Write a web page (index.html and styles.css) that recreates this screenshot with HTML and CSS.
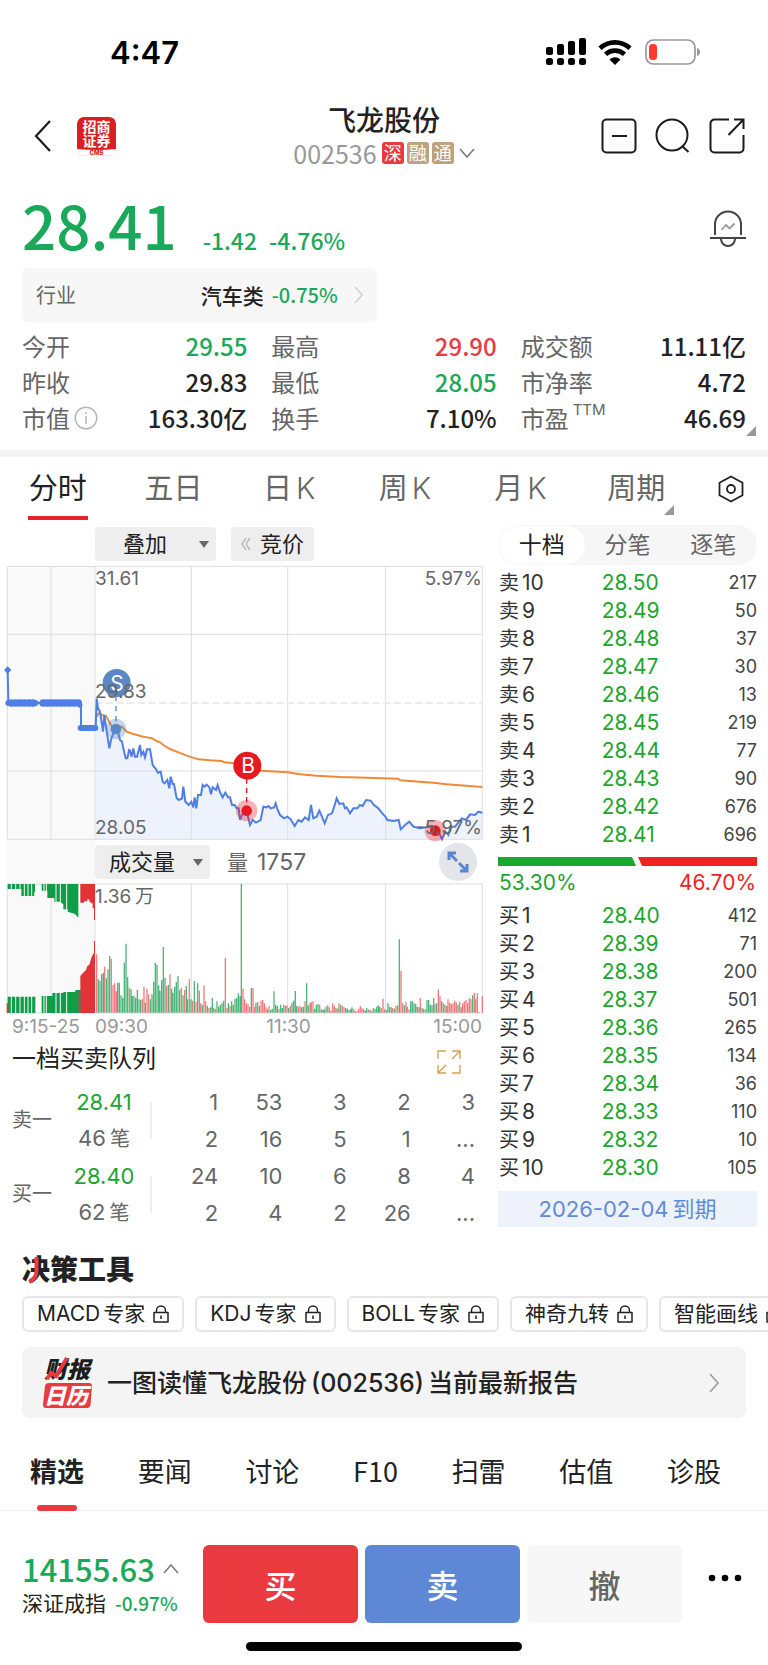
FILE: index.html
```html
<!DOCTYPE html>
<html lang="zh-CN">
<head>
<meta charset="utf-8">
<meta name="viewport" content="width=device-width, initial-scale=1">
<title>飞龙股份 002536</title>
<link rel="stylesheet" href="styles.css">
</head>
<body>
<svg class="defs" width="0" height="0" aria-hidden="true">
  <symbol id="lock" viewBox="0 0 16 18"><path d="M1 7.500h14v9.500h-14zM3.500 7.500v-2a4.500 4.500 0 0 1 9 0v2M8 10.500v3.500" fill="none" stroke="currentColor" stroke-width="1.500" stroke-linejoin="round"/></symbol>
  <symbol id="right" viewBox="0 0 10 20"><path d="M1 1l8 9-8 9" fill="none" stroke="currentColor" stroke-width="1.500"/></symbol>
</svg>

<div class="status">
  <span class="clock">4:47</span>
  <svg class="signal" viewBox="0 0 40 28" width="40" height="28" aria-hidden="true"><g><rect x="0" y="9" width="7" height="8" rx="2"/><rect x="11" y="6" width="7" height="11" rx="2"/><rect x="22" y="3" width="7" height="14" rx="2"/><rect x="33" y="0" width="7" height="17" rx="2"/><rect x="0" y="20" width="7" height="7" rx="2.500"/><rect x="11" y="20" width="7" height="7" rx="2.500"/><rect x="22" y="20" width="7" height="7" rx="2.500"/><rect x="33" y="20" width="7" height="7" rx="2.500"/></g></svg>
  <svg class="wifi" viewBox="0 0 34 25" width="34" height="25" aria-hidden="true"><path d="M2 8.300A22 22 0 0 1 32 8.300M7.500 14.300A14 14 0 0 1 26.500 14.300" fill="none" stroke="#000" stroke-width="4.600"/><path d="M17 25l-5.500-5.500a8 8 0 0 1 11 0z"/></svg>
  <svg viewBox="0 0 56 26" width="56" height="26" aria-hidden="true"><rect x="1" y="1" width="49" height="24" rx="7.500" fill="none" stroke="#999" stroke-width="1.700"/><rect x="4" y="5" width="8" height="16" rx="3.500" fill="#ff3b30"/><path d="M52 9c4 1 4 7 0 8z" fill="#999"/></svg>
</div>

<header class="header">
  <div class="side start">
    <button class="icon-btn" aria-label="返回"><svg viewBox="0 0 18 32" width="18" height="32"><path d="M16 1L2 16l14 15" fill="none" stroke="#1c1c1c" stroke-width="2.200"/></svg></button>
    <svg class="cms" viewBox="0 0 39 39" width="39" height="39" role="img" aria-label="招商证券 CMS"><rect x=".5" y=".5" width="38" height="38" rx="6" fill="#fff" stroke="#ececec"/><path d="M0 32V7a7 7 0 0 1 7-7h25a7 7 0 0 1 7 7v25q-19.500 2-39 0z" fill="#d91f22"/><g fill="#fff" font-size="14" font-weight="700" text-anchor="middle"><text x="19.500" y="15">招商</text><text x="19.500" y="29">证券</text></g><text x="19.500" y="38" fill="#d91f22" font-size="6" font-weight="800" text-anchor="middle">CMS</text></svg>
  </div>
  <div class="title">
    <h1>飞龙股份</h1>
    <button class="code">002536 <i class="tag red">深</i><i class="tag">融</i><i class="tag">通</i><svg viewBox="0 0 16 10" width="16" height="10"><path d="M1 1l7 8 7-8" fill="none" stroke="#777" stroke-width="1.500"/></svg></button>
  </div>
  <div class="side end">
    <button class="icon-btn" aria-label="删除自选"><svg viewBox="0 0 36 36" width="36" height="36"><rect x="1.500" y="1.500" width="33" height="33" rx="4" fill="none" stroke="#1c1c1c" stroke-width="2"/><path d="M11 18h15" stroke="#1c1c1c" stroke-width="2"/></svg></button>
    <button class="icon-btn" aria-label="搜索"><svg viewBox="0 0 36 36" width="36" height="36"><circle cx="17" cy="17" r="15.500" fill="none" stroke="#1c1c1c" stroke-width="2"/><path d="M27 28l6.500 6" stroke="#1c1c1c" stroke-width="2"/></svg></button>
    <button class="icon-btn" aria-label="分享"><svg viewBox="0 0 36 36" width="36" height="36"><path d="M20 1.500H5.500a4 4 0 0 0-4 4v25a4 4 0 0 0 4 4h25a4 4 0 0 0 4-4V17M25 1.500h9.500V11M34.500 1.500L19.500 17" fill="none" stroke="#1c1c1c" stroke-width="2"/></svg></button>
  </div>
</header>

<section class="quote">
  <div class="price-row">
    <strong class="price">28.41</strong>
    <span class="change">-1.42</span><span class="change">-4.76%</span>
    <button class="icon-btn bell" aria-label="提醒"><svg viewBox="0 0 36 37" width="36" height="37"><path d="M5 25V14.500a13 13 0 0 1 26 0V25M0 28h36M11 29a7 7 0 0 0 14 0" fill="none" stroke="#444" stroke-width="2"/><path d="M11.500 20l4.500-5 3.500 3.500 5-5" fill="none" stroke="#999" stroke-width="1.800"/></svg></button>
  </div>
  <a class="industry" href="#"><span class="muted">行业</span><span class="ind-name">汽车类</span><span class="green">-0.75%</span><svg width="9" height="20"><use href="#right"/></svg></a>
  <dl class="stats">
    <div><dt>今开</dt><dd class="green">29.55</dd></div>
    <div><dt>最高</dt><dd class="red-t">29.90</dd></div>
    <div><dt>成交额</dt><dd>11.11亿</dd></div>
    <div><dt>昨收</dt><dd>29.83</dd></div>
    <div><dt>最低</dt><dd class="green">28.05</dd></div>
    <div><dt>市净率</dt><dd>4.72</dd></div>
    <div><dt>市值<svg viewBox="0 0 24 24" width="24" height="24"><circle cx="12" cy="12" r="10.800" fill="none" stroke="#b5b5b5" stroke-width="1.400"/><path d="M12 10v8M12 6v2" stroke="#b5b5b5" stroke-width="1.500"/></svg></dt><dd>163.30亿</dd></div>
    <div><dt>换手</dt><dd>7.10%</dd></div>
    <div class="more"><dt>市盈<sup>TTM</sup></dt><dd>46.69</dd></div>
  </dl>
</section>

<nav class="periods">
  <button class="on">分时</button><button>五日</button><button>日<b>K</b></button><button>周<b>K</b></button><button>月<b>K</b></button><button class="drop">周期</button>
  <button class="setting" aria-label="设置"><svg viewBox="0 0 28 28" width="28" height="28"><path d="M14 1.500l11.500 6.300v12.400L14 26.500 2.500 20.200V7.800z" fill="none" stroke="#222" stroke-width="1.800" stroke-linejoin="round"/><circle cx="14" cy="14" r="4" fill="none" stroke="#222" stroke-width="1.800"/></svg></button>
</nav>

<main class="board">
  <div class="left">
    <div class="tools">
      <button class="pill overlay">叠加<i class="caret"></i></button>
      <button class="pill"><svg viewBox="0 0 10 12" width="10" height="12"><path d="M5 0L1 6l4 6M9 0L5 6l4 6" fill="none" stroke="#aaa" stroke-width="1.200"/></svg>竞价</button>
    </div>
    <svg class="chart" viewBox="0 0 490 278" role="img" aria-label="分时走势">
      <g transform="translate(0 -2) scale(.333333)">
        <path d="M22 19h263v820H22z" fill="#f9f9f9"/>
        <path d="M290 415L294 445 300 455 304 480 309 515 313 465 318 500 328 565 334 535 340 520 347 505 355 520 360 540 366 545 370 565 377 595 382 595 387 570 395 590 400 565 405 590 411 590 420 555 424 585 430 575 435 592 441 568 450 568 458 615 466 625 474 638 482 635 488 665 494 670 502 660 508 685 512 650 518 672 522 672 530 715 546 716 550 680 556 725 566 735 574 725 580 742 584 712 589 745 594 705 603 705 608 675 633 690 653 675 668 712 690 712 704 735 716 745 720 780 740 752 750 795 782 780 790 740 822 742 827 730 840 765 862 770 884 798 905 785 926 780 933 735 940 775 958 752 974 790 996 760 1010 715 1030 735 1050 760 1080 735 1098 720 1122 735 1156 770 1196 780 1202 808 1228 785 1260 805 1318 820 1326 838 1345 825 1365 800 1410 763 1447 758V838H287V504z" fill="#edf2fd"/>
        <g fill="none" stroke="#dedede" stroke-width="3"><path d="M22 19H1447V838H22zM22 223H1447M22 633H1447M153 19V838M285 19V838M574 19V838M863 19V838M1157 19V838"/><path d="M285 429H1447" stroke="#e6e6e6" stroke-width="4" stroke-dasharray="22 10"/></g>
        <path d="M290 470L296 460 306 465 318 468 326 482 336 500 366 500 380 515 400 522 430 530 457 535 470 543 480 547 490 555 510 567 530 575 560 587 595 598 630 601 665 603 672 607 705 610 740 615 782 632 863 637 900 643 950 647 1020 651 1100 653 1195 656 1200 661 1300 668 1340 673 1447 681" fill="none" stroke="#f1893a" stroke-width="6"/>
        <path d="M23 330L25 429H239V435H243V504H287L290 415 294 445 300 455 304 480 309 515 313 465 318 500 328 565 334 535 340 520 347 505 355 520 360 540 366 545 370 565 377 595 382 595 387 570 390 572 395 590 400 565 405 590 411 590 420 555 424 585 430 575 435 592 441 568 450 568 458 615 466 625 474 638 482 635 488 665 494 670 502 660 508 685 512 650 518 672 522 672 530 715 536 720 546 716 550 680 556 725 566 735 574 725 580 742 584 712 589 745 594 705 603 705 608 675 614 680 620 674 628 682 633 703 638 682 648 690 653 675 660 697 668 712 676 698 684 712 690 712 696 735 704 735 710 745 716 745 720 780 726 765 740 752 750 795 758 780 768 788 782 780 790 740 800 742 806 738 812 745 822 742 827 730 833 750 840 765 852 775 862 770 872 778 884 798 895 780 905 785 915 772 926 780 933 735 940 775 950 770 958 752 966 770 974 790 984 765 996 760 1004 735 1010 715 1018 732 1030 730 1035 745 1040 742 1050 760 1060 745 1072 745 1080 735 1088 738 1098 720 1112 722 1122 735 1135 745 1145 758 1156 770 1162 780 1180 783 1196 780 1202 808 1215 795 1228 785 1240 800 1260 805 1290 800 1306 812 1318 820 1326 838 1336 815 1345 825 1352 800 1365 800 1385 775 1398 780 1410 763 1425 765 1435 755 1447 758" fill="none" stroke="#4f7fe6" stroke-width="6"/>
        <g fill="none" stroke="#4f7fe6" stroke-linecap="round"><path d="M25 429H78M88 429h18M127 429h108M242 504H286" stroke-width="18"/><path d="M34 429H106" stroke-width="22" stroke-dasharray="1 12"/><path d="M130 429H236" stroke-width="23" stroke-dasharray="1 12"/></g>
        <path d="M23 319l11 11-11 11-11-11zM239 425l10 10-10 10-10-10z" fill="#4f7fe6"/>
        <circle cx="348" cy="507" r="31" fill="#5a87c6" opacity=".35"/><circle cx="348" cy="507" r="16" fill="#5a87c6"/><path d="M348 408V490" stroke="#5a87c6" stroke-width="4" stroke-dasharray="16 14"/>
        <circle cx="740" cy="752" r="32" fill="#e5222a" opacity=".35"/><circle cx="740" cy="752" r="16" fill="#e5191f"/><path d="M740 655V735" stroke="#e5191f" stroke-width="4" stroke-dasharray="16 12"/>
        <circle cx="1306" cy="812" r="32" fill="#e5222a" opacity=".35"/><circle cx="1306" cy="812" r="16" fill="#e5191f"/>
        <circle cx="350" cy="369" r="42" fill="#5a87c6"/><circle cx="742" cy="617" r="42" fill="#e5191f"/>
      </g>
      <g fill="#fff" font-size="21" text-anchor="middle"><text x="117" y="129">S</text><text x="248" y="211">B</text></g>
      <g class="axis"><text x="95" y="23">31.61</text><text x="95" y="136">29.83</text><text x="95" y="272">28.05</text><text x="482" y="23" text-anchor="end">5.97%</text><text x="482" y="272" text-anchor="end">-5.97%</text></g>
    </svg>
    <div class="vol-head">
      <div class="shade"></div>
      <button class="pill">成交量<i class="caret"></i></button>
      <span class="vol">量<b>1757</b></span>
      <button class="expand" aria-label="放大"><svg viewBox="0 0 24 24" width="24" height="24"><g fill="none" stroke="#5c84d6" stroke-width="3"><path d="M3 10V3h7M3 3l8 8M21 14v7h-7M21 21l-8-8"/></g></svg></button>
    </div>
    <svg class="chart" viewBox="0 44 490 130" role="img" aria-label="成交量">
      <g transform="scale(.333333)">
        <path d="M22 132h263v387H22z" fill="#f9f9f9"/>
        <path d="M22 132H1447V519H22zM153 132V519M285 132V519M574 132V519M863 132V519M1157 132V519" fill="none" stroke="#dedede" stroke-width="3"/>
        <path d="M23 132H105V155H103V168H64V147H23zM125 132H235V233L225 222 203 215V208H190V193L180 185H163V174H142V152H125zM23 470H106V519H23zM125 468H157V459H190V456H226V450H243V519H125z" fill="#109d48"/>
        <path d="M241 132H285V240H282V205H278V190H272V185H268V178H262V184H252V188H241zM241 408L248 400 258 390 262 378 268 374 275 350 282 338V303H285V519H241zM20 490h5v29h-5z" fill="#e03436"/>
        <path d="M235 452h7v67h-7z" fill="#87605b"/>
        <path d="M34 132V519M47 132V519M60 132V519M73 132V519M84 132V519M95 132V519M132 132V519M139 132V519M168 132V519M181 132V519M200 132V519" stroke="#f9f9f9" stroke-width="3"/>
        <path id="up" stroke="#ef7d80" stroke-width="4"/>
        <path id="down" stroke="#4fb67b" stroke-width="4"/>
      </g>
      <g class="axis"><text x="95" y="63">1.36</text><text x="135" y="63">万</text></g>
    </svg>
    <div class="times"><span>9:15-25</span><span>09:30</span><span>11:30</span><span>15:00</span></div>

    <div class="queue-title"><h2>一档买卖队列</h2><button class="icon-btn" aria-label="展开"><svg viewBox="0 0 24 24" width="24" height="24"><path d="M1 9V1h8M15 1h8v8M23 1l-8 8M23 15v8h-8M9 23H1v-8M1 23l8-8" fill="none" stroke="#d0a256" stroke-width="1.400"/></svg></button></div>
    <table class="queue">
      <tr><th rowspan="2">卖一</th><td class="p green2">28.41</td><td class="sep" rowspan="2"><i></i></td><td>1</td><td>53</td><td>3</td><td>2</td><td>3</td></tr>
      <tr><td class="p">46<b>笔</b></td><td>2</td><td>16</td><td>5</td><td>1</td><td>...</td></tr>
      <tr><th rowspan="2">买一</th><td class="p green2">28.40</td><td class="sep" rowspan="2"><i></i></td><td>24</td><td>10</td><td>6</td><td>8</td><td>4</td></tr>
      <tr><td class="p">62<b>笔</b></td><td>2</td><td>4</td><td>2</td><td>26</td><td>...</td></tr>
    </table>
  </div>

  <div class="right">
    <div class="segment"><button class="on">十档</button><button>分笔</button><button>逐笔</button></div>
    <table class="book">
      <tr><th>卖<b>10</b></th><td>28.50</td><td>217</td></tr>
      <tr><th>卖<b>9</b></th><td>28.49</td><td>50</td></tr>
      <tr><th>卖<b>8</b></th><td>28.48</td><td>37</td></tr>
      <tr><th>卖<b>7</b></th><td>28.47</td><td>30</td></tr>
      <tr><th>卖<b>6</b></th><td>28.46</td><td>13</td></tr>
      <tr><th>卖<b>5</b></th><td>28.45</td><td>219</td></tr>
      <tr><th>卖<b>4</b></th><td>28.44</td><td>77</td></tr>
      <tr><th>卖<b>3</b></th><td>28.43</td><td>90</td></tr>
      <tr><th>卖<b>2</b></th><td>28.42</td><td>676</td></tr>
      <tr><th>卖<b>1</b></th><td>28.41</td><td>696</td></tr>
    </table>
    <div class="ratio"><i class="buy" style="width:53.3%"></i><i class="sell"></i></div>
    <div class="ratio-text"><span>53.30%</span><span>46.70%</span></div>
    <table class="book">
      <tr><th>买<b>1</b></th><td>28.40</td><td>412</td></tr>
      <tr><th>买<b>2</b></th><td>28.39</td><td>71</td></tr>
      <tr><th>买<b>3</b></th><td>28.38</td><td>200</td></tr>
      <tr><th>买<b>4</b></th><td>28.37</td><td>501</td></tr>
      <tr><th>买<b>5</b></th><td>28.36</td><td>265</td></tr>
      <tr><th>买<b>6</b></th><td>28.35</td><td>134</td></tr>
      <tr><th>买<b>7</b></th><td>28.34</td><td>36</td></tr>
      <tr><th>买<b>8</b></th><td>28.33</td><td>110</td></tr>
      <tr><th>买<b>9</b></th><td>28.32</td><td>10</td></tr>
      <tr><th>买<b>10</b></th><td>28.30</td><td>105</td></tr>
    </table>
    <a class="expiry" href="#">2026-02-04<b>到期</b></a>
  </div>
</main>

<section class="decision">
  <h2>决策工具<svg viewBox="0 0 14 28" width="14" height="28" aria-hidden="true"><path d="M11.500 1V14Q11.500 23 4 26" fill="none" stroke="#e93a40" stroke-width="4"/></svg></h2>
  <div class="chips">
    <button>MACD<b>专家</b><svg width="16" height="18"><use href="#lock"/></svg></button>
    <button>KDJ<b>专家</b><svg width="16" height="18"><use href="#lock"/></svg></button>
    <button>BOLL<b>专家</b><svg width="16" height="18"><use href="#lock"/></svg></button>
    <button>神奇九转<svg width="16" height="18"><use href="#lock"/></svg></button>
    <button>智能画线<svg width="16" height="18"><use href="#lock"/></svg></button>
  </div>
  <a class="banner" href="#">
    <svg viewBox="0 0 50 52" width="50" height="52" role="img" aria-label="财报日历"><path d="M6 26h40q3 0 3 3l-1.500 19q-.5 3-3.500 3H3q-3 0-3-3L2 29q.5-3 4-3z" fill="#e93a40"/><g font-weight="900" font-style="italic"><text x="1" y="21" font-size="23" fill="#1c1c1c">财报</text><text x="1" y="47" font-size="22" fill="#fff">日历</text></g><path d="M4 22l4-6 5 3L24 1" fill="none" stroke="#e93a40" stroke-width="4"/></svg>
    <span class="banner-text">一图读懂飞龙股份<b>(002536)</b>当前最新报告</span>
    <svg class="go" width="10" height="20"><use href="#right"/></svg>
  </a>
</section>

<nav class="news"><button class="on">精选</button><button>要闻</button><button>讨论</button><button>F10</button><button>扫雷</button><button>估值</button><button>诊股</button></nav>

<footer class="trade">
  <button class="index"><span class="idx">14155.63<svg viewBox="0 0 16 10" width="16" height="10"><path d="M1 9l7-8 7 8" fill="none" stroke="#777" stroke-width="1.500"/></svg></span><span class="idx-name">深证成指<b>-0.97%</b></span></button>
  <button class="act buy-b">买</button><button class="act sell-b">卖</button><button class="act">撤</button>
  <button class="dots" aria-label="更多"><svg viewBox="0 0 34 8" width="34" height="8"><circle cx="4" cy="4" r="3.300"/><circle cx="17" cy="4" r="3.300"/><circle cx="30" cy="4" r="3.300"/></svg></button>
</footer>
<div class="home"></div>
<script src="volume.js"></script>
</body>
</html>
```
FILE: volume.js
```js
// One entry per minute: u = rising, d = falling, number = bar height.
const bars = `u175 d100 d95 d115 d120 u138 d103 d130 d170 u162 u83 u88 u64 d90 d90 d52 d45 d150 d207 d107
u75 d70 d50 d50 d45 d68 d40 d38 u42 u78 d30 u72 u55 d40 d55 d92 d150 d144 d82 d66 d98 d197 d104 u80 d84 u115
d72 d60 d78 d92 d110 d68 u75 d52 u68 d80 d40 u100 d40 u36 d94 u32 d88 u66 u28 d24 u82 u34 d20 u14 d16 d44 u14
u12 d34 d18 d24 d30 d36 u164 u14 d28 u20 d34 d24 d42 d44 d58 d50 d386 u72 u40 u28 u26 u18 d74 u74 u18 d30 u32
d20 u36 u38 u28 u16 d10 u20 d8 d12 d64 d24 d20 u12 d24 d14 u24 d20 u22 d14 u20 d30 d36 d65 d20 u18 u20 d16 d18
u34 d88 d22 u28 u32 u34 d12 d24 d26 u24 d10 d8 d10 d18 u22 u16 d6 u28 u20 d14 u12 u28 d24 u20 u18 d14 d12 d8
d10 d16 u10 u6 u6 u12 u20 u14 d10 d6 d14 u10 d8 d6 u14 d12 d18 d22 d18 u14 u42 u10 d8 d28 d18 u16 u14
d12 u20 u22 d220 u126 u28 d22 u32 u18 u10 d34 d34 d30 d26 d18 u16 u44 d14 d12 u10 d38 d38 d24 d22 d44
u26 d28 u70 u50 d34 u28 d24 u20 u40 u30 u26 u28 u36 u30 d24 u32 u16 u28 u34 u38 u30 u44 u40 d52 u60 u40 u58 d2 u0 u50`.split(/\s+/);
const paths = { u: '', d: '' };
bars.forEach((bar, i) => {
  const x = Math.round(290 + i * 1157 / (bars.length - 1));
  paths[bar[0]] += `M${x} 518v-${bar.slice(1)}`;
});
document.getElementById('up').setAttribute('d', paths.u);
document.getElementById('down').setAttribute('d', paths.d);
```
FILE: styles.css
```css
* { box-sizing: border-box; }
body { margin: 0; background: #fff; color: #222; overflow-x: hidden; font-family: Inter, "Noto Sans CJK SC", sans-serif; }
button { border: 0; padding: 0; margin: 0; background: none; color: inherit; font: inherit; cursor: pointer; }
a { color: inherit; text-decoration: none; }
h1, h2, dl, dd { margin: 0; font-weight: 400; }
i { font-style: normal; }
b { font-weight: inherit; }
svg { display: block; flex: none; }
table { border-collapse: collapse; width: 100%; table-layout: fixed; }
td, th { padding: 0; font-weight: 400; }
.defs { position: absolute; }
.green { color: #1aa95a; }
.green2 { color: #1ca52f; }
.red-t { color: #e93a40; }
.muted { color: #666; }
.icon-btn { display: flex; }

.status { display: flex; align-items: center; height: 104px; padding: 0 67px 0 110px; }
.clock { margin-right: auto; font-size: 31px; font-weight: 600; color: #000; }
.signal { margin-right: 12px; }
.wifi { margin-right: 13px; }

.header { display: grid; grid-template-columns: 1fr auto 1fr; align-items: center; height: 64px; padding: 0 23px; }
.side { display: flex; align-items: center; gap: 25px; }
.side.start { padding-left: 11px; }
.side.end { justify-content: flex-end; gap: 18px; }
.title { display: flex; flex-direction: column; align-items: center; }
.title h1 { font-size: 28px; line-height: 34px; font-weight: 500; }
.code { display: flex; align-items: center; gap: 3px; font-family: "Noto Sans CJK SC", sans-serif; font-size: 25px; line-height: 30px; color: #999; }
.tag { width: 22px; height: 22px; border-radius: 3px; background: #bda27c; color: #fff; font-size: 18px; line-height: 21px; text-align: center; }
.tag.red { background: #e93a40; margin-left: 2px; }
.code svg { margin-left: 2px; }

.quote { padding: 28px 22px 14px; font-family: "Noto Sans CJK SC", sans-serif; border-bottom: 7px solid #f4f4f4; }
.price-row { display: flex; align-items: flex-end; height: 56px; color: #1aa95a; }
.price { font-size: 60px; line-height: 56px; font-weight: 500; margin-right: 26px; }
.change { font-size: 23px; line-height: 24px; font-weight: 500; margin-right: 12px; }
.bell { margin: 0 0 5px auto; }
.industry { display: flex; align-items: center; width: 49%; height: 54px; margin: 16px 0 6px; padding: 0 14px; border-radius: 6px; background: #f7f7f7; font-size: 20px; line-height: 28px; }
.ind-name { margin: 0 8px 0 auto; font-size: 21px; font-weight: 500; }
.industry .green { font-weight: 500; }
.industry svg { margin-left: 16px; color: #ccc; }
.stats { display: grid; grid-template-columns: repeat(3, 1fr); column-gap: 24px; }
.stats div { display: flex; justify-content: space-between; font-size: 24px; line-height: 36px; }
.stats dt { display: flex; align-items: center; gap: 4px; color: #666; }
.stats dd { font-weight: 500; }
.stats sup { align-self: flex-start; font-size: 15px; line-height: 20px; font-family: Inter, sans-serif; }
.more { position: relative; }
.more::after, .drop::after { content: ""; position: absolute; right: -10px; bottom: 0; border: 5px solid #999; border-top-color: transparent; border-left-color: transparent; }

.periods { display: flex; height: 63px; font-size: 29px; line-height: 40px; color: #666; }
.periods button { position: relative; flex: 1; }
.periods b { margin-left: 4px; font-size: 30px; font-weight: 300; }
.periods .on { color: #222; }
.periods .on::after { content: ""; position: absolute; left: 28px; right: 28px; bottom: 0; height: 4px; background: #e5222a; }
.periods .drop::after { right: 20px; bottom: 5px; }
.periods .setting { flex: 0 0 74px; display: flex; align-items: center; justify-content: center; }

.board { display: grid; grid-template-columns: minmax(0, 490fr) minmax(0, 278fr); }
.tools { display: flex; gap: 15px; padding: 7px 0 1px 95px; }
.pill { display: flex; align-items: center; justify-content: center; gap: 9px; height: 34px; padding: 0 10px; border-radius: 4px; background: #eee; font-size: 22px; line-height: 32px; white-space: nowrap; }
.overlay { width: 121px; padding: 0 7px 0 28px; justify-content: space-between; }
.caret { border: 5px solid transparent; border-top: 7px solid #666; border-bottom: 0; }
.chart { width: 100%; height: auto; overflow: visible; }
.axis { font-size: 19px; fill: #666; }
.vol-head { display: flex; align-items: center; height: 44px; padding: 0 13px 0 7px; }
.shade { width: 88px; align-self: stretch; background: #f9f9f9; }
.vol-head .pill { gap: 18px; padding: 0 7px 0 14px; }
.vol { margin: 0 auto 0 17px; font-size: 21px; line-height: 32px; color: #666; }
.vol b { margin-left: 9px; font-size: 23px; }
.expand { display: flex; align-items: center; justify-content: center; width: 38px; height: 38px; border-radius: 50%; background: #e4e5e9; }
.times { display: grid; grid-template-columns: 83px 1fr 1fr 1fr; padding: 0 8px 0 12px; font-size: 19px; line-height: 26px; color: #999; white-space: nowrap; }
.times span:nth-child(3) { text-align: center; }
.times span:nth-child(4) { text-align: right; }
.queue-title { display: flex; justify-content: space-between; align-items: center; height: 43px; padding: 0 29px 0 12px; }
.queue-title h2 { font-size: 24px; line-height: 32px; padding-bottom: 6px; }
.queue { width: calc(100% - 27px); margin-left: 12px; font-size: 22px; line-height: 30px; color: #666; }
.queue tr { height: 37px; }
.queue th { width: 42px; text-align: left; font-size: 20px; }
.queue td { text-align: right; }
.queue .p { width: 96px; padding-left: 4px; text-align: center; }
.queue .p.green2 { color: #1ca52f; }
.queue .p b { margin-left: 4px; font-size: 20px; }
.queue .sep { width: 4px; }
.sep i { display: block; width: 2px; height: 37px; background: #eee; }

.right { padding: 5px 11px 0 8px; }
.segment { display: flex; height: 40px; padding: 1px; border-radius: 20px; background: #f6f6f6; font-size: 23px; line-height: 34px; color: #666; }
.segment button { flex: 1; border-radius: 19px; }
.segment .on { color: #222; background: #fff; }
.book { margin-top: 4px; font-size: 21px; line-height: 26px; color: #333; }
.book tr { height: 28px; }
.book th { width: 35%; padding-left: 1px; text-align: left; font-size: 20px; }
.book b { margin-left: 3px; font-size: 21px; }
.book td { color: #1ca52f; padding-left: 13px; }
.book td + td { text-align: right; color: #444; font-size: 18px; padding: 0; }
.ratio { display: flex; gap: 2px; height: 9px; margin-top: 8px; }
.ratio .buy { background: #1ca52f; clip-path: polygon(0 0, calc(100% - 4px) 0, 100% 100%, 0 100%); }
.ratio .sell { flex: 1; background: #ee2224; clip-path: polygon(0 0, 100% 0, 100% 100%, 4px 100%); }
.ratio-text { display: flex; justify-content: space-between; font-size: 21px; line-height: 34px; color: #1ca52f; padding: 0 1px; }
.ratio-text span + span { color: #ee2224; }
.ratio-text + .book { margin-top: 2px; }
.expiry { display: block; margin-top: 9px; height: 36px; background: #eef3fb; color: #6289d8; font-size: 22px; line-height: 36px; text-align: center; }
.expiry b { margin-left: 4px; }

.decision { padding: 21px 22px 0; }
.decision h2 { position: relative; font-size: 28px; line-height: 36px; font-weight: 900; }
.decision h2 svg { position: absolute; left: 3px; top: 4px; }
.chips { display: flex; gap: 11px; margin: 8px -22px 15px 0; overflow: hidden; }
.chips button { display: flex; flex: none; align-items: center; height: 36px; padding: 0 13px; border: 2px solid #e6e6e6; border-radius: 6px; font-size: 21px; line-height: 32px; }
.chips b { margin-left: 3px; }
.chips svg { margin-left: 8px; }
.banner { display: flex; align-items: center; height: 71px; padding: 0 27px 0 21px; border-radius: 8px; background: #f4f4f4; font-size: 25px; line-height: 36px; font-weight: 500; white-space: nowrap; }
.banner-text { margin-left: 14px; }
.banner b { margin: 0 4px; }
.go { margin-left: auto; color: #999; }

.news { display: flex; justify-content: space-between; height: 93px; padding: 0 47px 0 30px; border-bottom: 1px solid #eee; font-family: "Noto Sans CJK SC", sans-serif; font-size: 27px; line-height: 36px; }
.news button { position: relative; padding-top: 14px; }
.news .on { font-weight: 700; }
.news .on::after { content: ""; position: absolute; left: 7px; right: 7px; bottom: -1px; height: 6px; border-radius: 3px; background: #e93a40; }

.trade { display: flex; gap: 7px; padding: 34px 22px 19px; font-family: "Noto Sans CJK SC", sans-serif; }
.index { width: 174px; text-align: left; white-space: nowrap; }
.idx { display: flex; align-items: center; gap: 8px; font-size: 31px; line-height: 36px; font-weight: 500; color: #1aa95a; }
.idx-name { display: block; font-size: 21px; line-height: 30px; }
.idx-name b { margin-left: 9px; font-size: 19px; font-weight: 500; color: #1aa95a; }
.act { flex: 1; height: 78px; border-radius: 6px; background: #f7f7f7; color: #666; font-size: 32px; line-height: 40px; font-weight: 500; }
.buy-b { background: #e93a40; color: #fff; }
.sell-b { background: #5e87d5; color: #fff; }
.dots { display: flex; align-items: center; justify-content: center; width: 57px; padding: 0 0 12px 14px; }
.home { width: 36%; height: 9px; margin: 0 auto 15px; border-radius: 5px; background: #000; }
```
